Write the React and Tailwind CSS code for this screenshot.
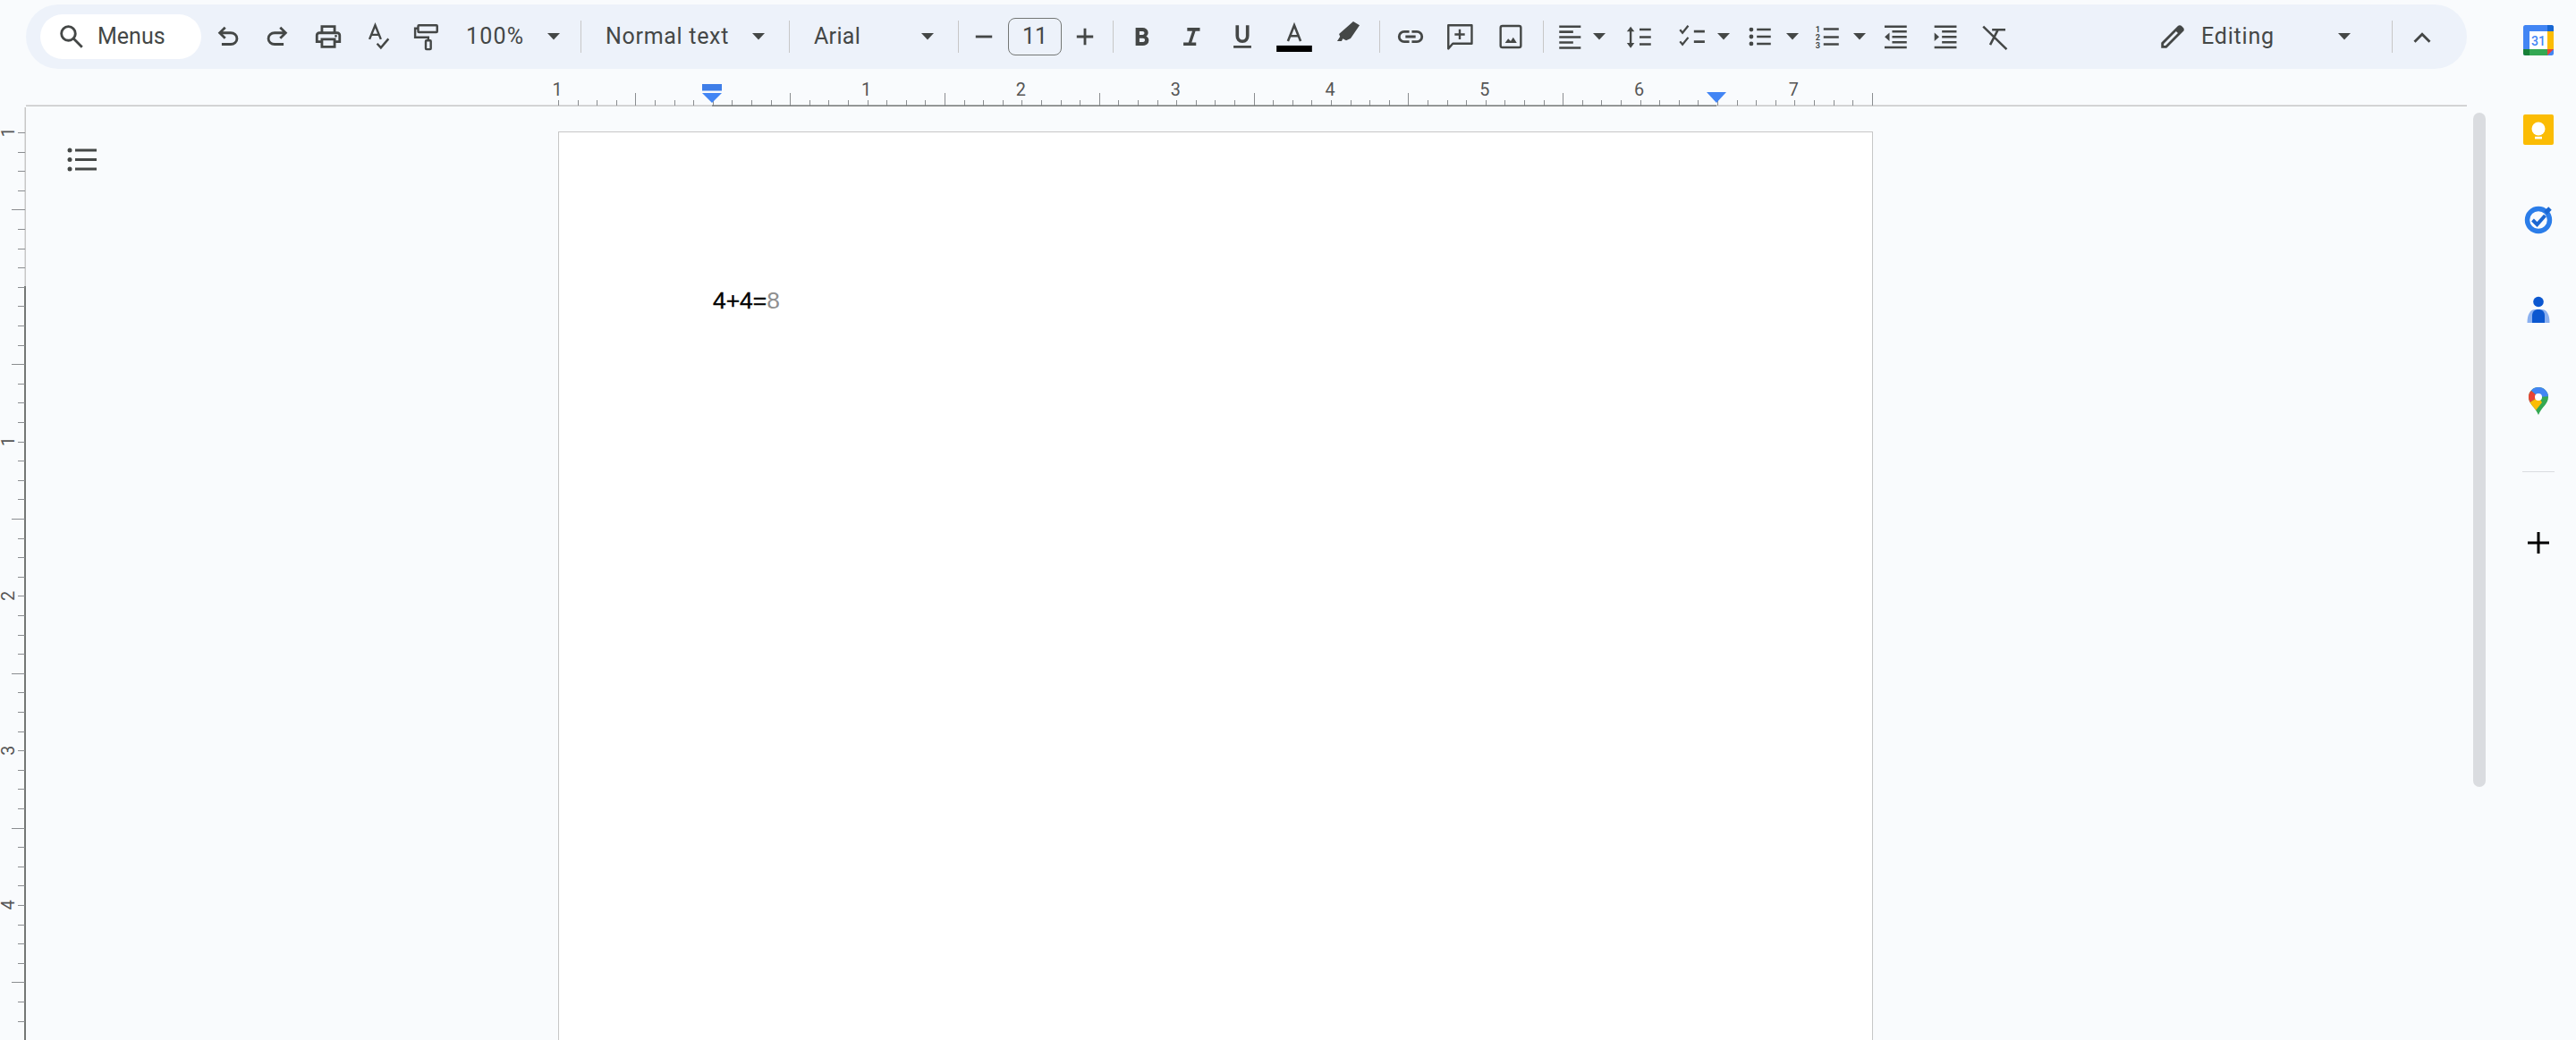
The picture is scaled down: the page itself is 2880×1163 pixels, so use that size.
import React from "react";

const ink = "#444746";

const Ic = ({ className = "", vb = "0 0 24 24", children }) => (
  <svg viewBox={vb} fill={ink} className={`h-[34px] w-[34px] shrink-0 overflow-visible ${className}`}>
    {children}
  </svg>
);

// outline style icons
const Ln = ({ className = "", children, sw = 1.7 }) => (
  <Ic className={className}>
    <g fill="none" stroke={ink} strokeWidth={sw}>
      {children}
    </g>
  </Ic>
);

const M = "0 -960 960 960";

const Caret = ({ className = "" }) => (
  <svg viewBox="0 0 14 8" fill={ink} className={`h-[8px] w-[14px] shrink-0 ${className}`}>
    <polygon points="0,0 14,0 7,7.5" />
  </svg>
);

const Divider = ({ className = "" }) => <div className={`h-[36px] w-px shrink-0 bg-[#c7c7c7] ${className}`} />;

const Label = ({ className = "", children }) => (
  <div className={`shrink-0 whitespace-nowrap text-[25px] leading-[30px] text-[#444746] ${className}`}>{children}</div>
);

function Toolbar() {
  return (
    <div className="mt-[5px] flex h-[72px] w-[2729px] items-center rounded-[36px] bg-[#edf2fa]">
      <div className="ml-[16px] flex h-[50px] w-[180px] shrink-0 items-center rounded-full bg-white pl-[18px]">
        <Ic vb={M}>
          <path d="M784-120 532-372q-30 24-69 38t-83 14q-109 0-184.500-75.500T120-580q0-109 75.500-184.500T380-840q109 0 184.500 75.500T640-580q0 44-14 83t-38 69l252 252-56 56ZM380-400q75 0 127.500-52.500T560-580q0-75-52.500-127.500T380-760q-75 0-127.500 52.500T200-580q0 75 52.500 127.500T380-400Z" />
        </Ic>
        <Label className="ml-[12px]">Menus</Label>
      </div>

      <Ic vb={M} className="ml-[13px]">
        <path d="M280-200v-80h284q63 0 109.500-40T720-420q0-60-46.500-100T564-560H312l104 104-56 56-200-200 200-200 56 56-104 104h252q97 0 166.500 63T800-420q0 94-69.500 157T564-200H280Z" />
      </Ic>
      <Ic vb={M} className="ml-[21px]">
        <path d="M396-200q-97 0-166.500-63T160-420q0-94 69.500-157T396-640h252L544-744l56-56 200 200-200 200-56-56 104-104H396q-63 0-109.500 40T240-420q0 60 46.500 100T396-280h284v80H396Z" />
      </Ic>
      <Ic vb={M} className="ml-[23px]">
        <path d="M640-640v-120H320v120h-80v-200h480v200h-80Zm-480 80h640-640Zm560 100q17 0 28.500-11.500T760-500q0-17-11.500-28.500T720-540q-17 0-28.500 11.500T680-500q0 17 11.500 28.500T720-460Zm-80 260v-160H320v160h320Zm80 80H240v-160H80v-240q0-51 35-85.500t85-34.500h560q51 0 85.500 34.500T880-520v240H720v160Zm80-240v-160q0-17-11.500-28.500T760-560H200q-17 0-28.500 11.500T160-520v160h80v-80h480v80h80Z" />
      </Ic>
      <Ln className="ml-[22px]">
        <path d="M5 14 L9.500 3 L14 14 M6.500 10.500 H12.500" />
        <path d="M11 17.500 l3 3.200 l6-7" />
      </Ln>
      <Ln className="ml-[19px]">
        <rect x="6" y="3" width="15" height="5.500" rx="0.600" />
        <path d="M6 5.500 H3.600 V12.500 H14 V15" />
        <rect x="12" y="15" width="4" height="7" rx="0.600" />
      </Ln>

      <Label className="ml-[28px] w-[91px] tracking-[1.2px]">100%</Label>
      <Caret />
      <Divider className="ml-[23px]" />

      <Label className="ml-[27px] w-[164px] tracking-[0.7px]">Normal text</Label>
      <Caret />
      <Divider className="ml-[27px]" />

      <Label className="ml-[27px] w-[120px] tracking-[0.3px]">Arial</Label>
      <Caret />
      <Divider className="ml-[27px]" />

      <Ln className="ml-[11px]" sw={2}>
        <path d="M5.500 12 H18.500" />
      </Ln>
      <div className="ml-[10px] flex h-[42px] w-[60px] shrink-0 items-center justify-center rounded-[8px] border border-[#747775]">
        <Label>11</Label>
      </div>
      <Ln className="ml-[9px]" sw={2}>
        <path d="M5.500 12 H18.500 M12 5.500 V18.500" />
      </Ln>
      <Divider className="ml-[14px]" />

      <Ic vb={M} className="ml-[15px]">
        <path d="M272-200v-560h221q65 0 120 40t55 111q0 51-23 78.500T602-491q25 11 55.500 41t30.500 90q0 89-65 124.500T501-200H272Zm121-112h104q48 0 58.500-24.500T566-372q0-11-10.500-35.500T494-432H393v120Zm0-228h93q33 0 48-17t15-38q0-24-17-39t-44-15h-95v109Z" />
      </Ic>
      <Ic vb={M} className="ml-[22px]">
        <path d="M200-200v-100h160l120-360H320v-100h400v100H580L460-300h140v100H200Z" />
      </Ic>
      <Ic vb={M} className="ml-[22px]">
        <path d="M200-120v-80h560v80H200Zm280-160q-101 0-157-63t-56-167v-330h103v336q0 56 28 91t82 35q54 0 82-35t28-91v-336h103v330q0 104-56 167t-157 63Z" />
      </Ic>

      <Ic className="ml-[24px]">
        <path d="M7 15.500 L12 3 L17 15.500 M8.400 11.500 H15.600" fill="none" stroke={ink} strokeWidth="1.800" />
        <rect x="-2" y="19" width="28" height="5" fill="#000" />
      </Ic>
      <Ic className="ml-[26px]">
        <path d="M16.200 0 L21.200 3 L14.100 13.400 L10.600 15 L8 13.500 L7 15.500 H3.500 L5.800 12 L5 9.900 Z" />
      </Ic>
      <Divider className="ml-[18px]" />

      <Ic vb={M} className="ml-[17px]">
        <path d="M440-280H280q-83 0-141.500-58.500T80-480q0-83 58.500-141.500T280-680h160v80H280q-50 0-85 35t-35 85q0 50 35 85t85 35h160v80ZM320-440v-80h320v80H320Zm200 160v-80h160q50 0 85-35t35-85q0-50-35-85t-85-35H520v-80h160q83 0 141.500 58.500T880-480q0 83-58.500 141.500T680-280H520Z" />
      </Ic>
      <Ln className="ml-[21px]">
        <path d="M3 3 H21.500 V17.500 H6.500 L3 21.500 Z" strokeLinejoin="round" />
        <path d="M12 6.200 V14.200 M8 10.200 H16" />
      </Ln>
      <Ic className="ml-[23px]">
        <rect x="4" y="3.500" width="16" height="17" rx="1.500" fill="none" stroke={ink} strokeWidth="1.700" />
        <path d="M7.500 17 L10 13.500 L12 15.500 L14 12.500 L16.800 17 Z" />
      </Ic>
      <Divider className="ml-[19px]" />

      <Ln className="ml-[13px]" sw={1.8}>
        <path d="M3 4 H20 M3 8.200 H14 M3 12.400 H20 M3 16.600 H14 M3 20.800 H20" />
      </Ln>
      <Caret className="ml-[8px]" />
      <Ic className="ml-[21px]">
        <path d="M5 7 V18" fill="none" stroke={ink} strokeWidth="1.700" />
        <path d="M2 8 L5 4 L8 8 Z M2 17 L5 21 L8 17 Z" />
        <path d="M12 6.400 H21 M12 12.400 H21 M12 18 H21" fill="none" stroke={ink} strokeWidth="1.800" />
      </Ic>
      <Ln className="ml-[24px]" sw={1.6}>
        <path d="M3 6.600 l2 2.400 l4.500-5.600 M3 15.800 l2 2.400 l4.500-5.600" />
        <path d="M14 7.800 H22.500 M14 16 H22.500" strokeWidth="1.900" />
      </Ln>
      <Caret className="ml-[12px]" />
      <Ic className="ml-[16px]">
        <circle cx="5.600" cy="6.400" r="1.700" />
        <circle cx="5.600" cy="12" r="1.700" />
        <circle cx="5.600" cy="17.600" r="1.700" />
        <path d="M10 6.400 H21 M10 12 H21 M10 17.600 H21" fill="none" stroke={ink} strokeWidth="1.800" />
      </Ic>
      <Caret className="ml-[13px]" />
      <Ic className="ml-[15px]">
        <text x="2.600" y="8.600" fontSize="6.400" fontWeight="700">1</text>
        <text x="2.600" y="15" fontSize="6.400" fontWeight="700">2</text>
        <text x="2.600" y="21.400" fontSize="6.400" fontWeight="700">3</text>
        <path d="M9 6 H21 M9 12.400 H21 M9 18 H21" fill="none" stroke={ink} strokeWidth="1.800" />
      </Ic>
      <Caret className="ml-[12px]" />
      <Ic className="ml-[16px]">
        <path d="M3.500 4 H21 M3.500 20.500 H21 M9.500 8 H21 M9.500 12.200 H21 M9.500 16.400 H21" fill="none" stroke={ink} strokeWidth="1.800" />
        <path d="M7.400 8.800 V15.600 L3.600 12.200 Z" />
      </Ic>
      <Ic className="ml-[21px]">
        <path d="M4 4 H21.500 M4 20.500 H21.500 M10 8 H21.500 M10 12.200 H21.500 M10 16.400 H21.500" fill="none" stroke={ink} strokeWidth="1.800" />
        <path d="M4 8.800 V15.600 L7.800 12.200 Z" />
      </Ic>
      <Ln className="ml-[22px]" sw={1.8}>
        <path d="M3 4 L21.500 22 M10 6.500 H20.500 M14.700 6.500 L8.500 18.500" />
      </Ln>

      <Ic vb={M} className="ml-[165px]">
        <path d="M200-200h57l391-391-57-57-391 391v57Zm-80 80v-170l528-527q12-11 26.500-17t30.500-6q16 0 31 6t26 18l55 56q12 11 17.500 26t5.500 30q0 16-5.500 30.500T817-647L290-120H120Zm640-584-56-56 56 56Zm-141 85-28-29 57 57-29-28Z" />
      </Ic>
      <Label className="ml-[15px] w-[153px] tracking-[0.8px]">Editing</Label>
      <Caret />
      <Divider className="ml-[46px]" />
      <Ln className="ml-[16px]" sw={2}>
        <path d="M6 16 L12 10 L18 16" />
      </Ln>
    </div>
  );
}

function HorizontalRuler() {
  const ticks = Array.from({ length: 69 }, (_, i) => i);
  const labels = [
    [623, "1"],
    [968.6, "1"],
    [1141.4, "2"],
    [1314.2, "3"],
    [1487, "4"],
    [1659.8, "5"],
    [1832.6, "6"],
    [2005.4, "7"],
  ];
  return (
    <svg viewBox="29 77 2729 43" className="h-[43px] w-[2729px] shrink-0">
      <rect x="29" y="117.500" width="767" height="1.500" fill="#c7c7c7" />
      <rect x="796" y="117.500" width="1123" height="1.500" fill="#747775" />
      <rect x="1919" y="117.500" width="839" height="1.500" fill="#c7c7c7" />
      {ticks.map((i) => {
        const x = Math.round(624 + i * 21.6) + 0.5;
        return <line key={i} x1={x} x2={x} y1={i % 8 === 4 ? 104 : 112} y2="118" stroke="#8a8d90" strokeWidth="1" />;
      })}
      {labels.map(([x, t]) => (
        <text key={x} x={x} y="107" textAnchor="middle" fontSize="19.800" fill="#555">
          {t}
        </text>
      ))}
      <rect x="785" y="94" width="22" height="7.500" fill="#3f7ee8" />
      <polygon points="785,104 807,104 796,115" fill="#4285f4" />
      <polygon points="1908,103 1930,103 1919,115" fill="#4285f4" />
    </svg>
  );
}

function VerticalRuler() {
  const ticks = Array.from({ length: 48 }, (_, i) => i);
  const labels = [
    [147, "1"],
    [492.6, "1"],
    [665.4, "2"],
    [838.2, "3"],
    [1011, "4"],
  ];
  return (
    <svg viewBox="0 119 29 1044" className="h-[1044px] w-[29px] shrink-0">
      <rect x="27.500" y="119" width="1.500" height="201" fill="#c7c7c7" />
      <rect x="27" y="319" width="2" height="844" fill="#747775" />
      {ticks.map((i) => {
        const y = Math.round(147 + i * 21.6) + 0.5;
        return <line key={i} x1={i % 8 === 4 ? 13 : 20} x2="28" y1={y} y2={y} stroke="#8a8d90" strokeWidth="1" />;
      })}
      {labels.map(([y, t]) => (
        <text
          key={y}
          x="9"
          y={y}
          transform={`rotate(-90 9 ${y}) translate(0 7)`}
          textAnchor="middle"
          fontSize="19.800"
          fill="#555"
        >
          {t}
        </text>
      ))}
    </svg>
  );
}

function Document() {
  return (
    <div className="flex h-[1044px] items-start overflow-hidden">
      <VerticalRuler />
      <svg viewBox="0 0 33 27" fill={ink} className="ml-[46px] mt-[45px] h-[27px] w-[33px] shrink-0">
        <circle cx="3" cy="3" r="2.500" />
        <circle cx="3" cy="13.500" r="2.500" />
        <circle cx="3" cy="24" r="2.500" />
        <rect x="9" y="1.500" width="24" height="3" />
        <rect x="9" y="12" width="24" height="3" />
        <rect x="9" y="22.500" width="24" height="3" />
      </svg>
      <div className="ml-[516px] mt-[27px] h-[1900px] w-[1470px] shrink-0 border border-[#c7c7c7] bg-white pl-[172px] pt-[173px] [font-family:'Liberation_Sans',Arial,sans-serif]">
        <div className="text-[26.4px] leading-[30px] text-black">
          <span className="[-webkit-text-stroke:0.4px_black]">4+4=</span>
          <span className="text-[#8f8f8f]">8</span>
        </div>
      </div>
    </div>
  );
}

function SidePanel() {
  return (
    <div className="flex w-[101px] shrink-0 flex-col items-center pl-[16px] pt-[28px]">
      {/* calendar */}
      <svg viewBox="0 0 34 34" className="h-[34px] w-[34px] shrink-0">
        <rect x="0" y="0" width="34" height="34" rx="2.500" fill="#4285f4" />
        <rect x="7" y="7" width="20" height="20" fill="#fff" />
        <path d="M27 0 h4.500 a2.500 2.500 0 0 1 2.500 2.500 V7 H27 Z" fill="#1967d2" />
        <rect x="27" y="7" width="7" height="20" fill="#fbbc04" />
        <rect x="7" y="27" width="20" height="7" fill="#34a853" />
        <path d="M0 27 h7 v7 H2.500 A2.500 2.500 0 0 1 0 31.500 Z" fill="#188038" />
        <polygon points="27,27 34,27 27,34" fill="#ea4335" />
        <text x="17" y="22.500" textAnchor="middle" fontSize="14" fontWeight="500" fill="#4285f4">
          31
        </text>
      </svg>
      {/* keep */}
      <svg viewBox="0 0 34 34" className="mt-[66px] h-[34px] w-[34px] shrink-0">
        <rect width="34" height="34" rx="2" fill="#fbbc04" />
        <circle cx="17" cy="16" r="7.500" fill="#fff" />
        <rect x="13" y="24.800" width="8" height="2.600" fill="#fff" />
      </svg>
      {/* tasks */}
      <svg viewBox="0 0 34 34" fill="none" className="mt-[67px] h-[34px] w-[34px] shrink-0">
        <circle cx="17" cy="17" r="12.500" stroke="#2b7de9" strokeWidth="5.400" />
        <path d="M10.500 17 l5 5 l9-10" stroke="#1a67d2" strokeWidth="4" />
        <path d="M25 9 l5-5" stroke="#1a67d2" strokeWidth="5" />
      </svg>
      {/* contacts */}
      <svg viewBox="0 0 34 34" className="mt-[67px] h-[34px] w-[34px] shrink-0">
        <path d="M4.500 31 c0-9 3-15 9-15 h7 c6 0 9 6 9 15 Z" fill="#8ab0f0" />
        <path d="M10 31 v-8 c0-4.500 3-7 7-7 s7 2.500 7 7 v8 Z" fill="#0b57d0" />
        <circle cx="17" cy="7.500" r="5.800" fill="#0b57d0" />
      </svg>
      {/* maps */}
      <svg viewBox="0 0 34 34" className="mt-[67px] h-[34px] w-[34px] shrink-0">
        <clipPath id="pin">
          <path d="M17 2a11 11 0 0 1 11 11c0 8-7.500 11-11 20c-3.500-9-11-12-11-20A11 11 0 0 1 17 2z" />
        </clipPath>
        <g clipPath="url(#pin)">
          <rect width="34" height="34" fill="#34a853" />
          <polygon points="6,0 30,0 30,12 17,13 9,6" fill="#4285f4" />
          <polygon points="9,6 17,13 6,20 0,10" fill="#ea4335" />
          <polygon points="6,20 17,13 21,19 14,28" fill="#fbbc04" />
        </g>
        <circle cx="17" cy="13" r="4" fill="#fff" />
      </svg>
      <div className="mt-[62px] h-px w-[36px] shrink-0 bg-[#dadce0]" />
      {/* add */}
      <svg viewBox="0 0 34 34" fill="none" stroke="#000" strokeWidth="3" className="mt-[62px] h-[34px] w-[34px] shrink-0">
        <path d="M5 17 H29 M17 5 V29" />
      </svg>
    </div>
  );
}

export default function App() {
  return (
    <div className="flex h-[1163px] w-[2880px] overflow-hidden bg-[#f9fbfd] [font-family:Roboto,sans-serif]">
      <div className="flex w-[2765px] shrink-0 flex-col">
        <div className="pl-[29px]">
          <Toolbar />
          <HorizontalRuler />
        </div>
        <Document />
      </div>
      <div className="mt-[126px] h-[754px] w-[14px] shrink-0 rounded-full bg-[#dadce0]" />
      <SidePanel />
    </div>
  );
}
